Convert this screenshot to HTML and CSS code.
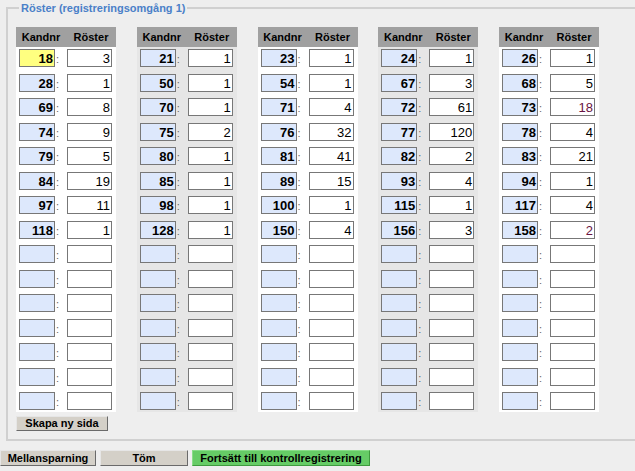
FILE: index.html
```html
<!DOCTYPE html>
<html lang="sv">
<head>
<meta charset="utf-8">
<title>Röster</title>
<link rel="stylesheet" href="styles.css">
</head>
<body>
<fieldset class="group">
  <legend class="legend">Röster (registreringsomgång 1)</legend>
  <div class="columns">
    <div class="col">
      <div class="head"><span>Kandnr</span><span>Röster</span></div>
      <div class="body">
        <div class="row"><div class="kcell"><div class="kbox cur">18</div><span class="colon">:</span></div><div class="rbox">3</div></div>
        <div class="row"><div class="kcell"><div class="kbox">28</div><span class="colon">:</span></div><div class="rbox">1</div></div>
        <div class="row"><div class="kcell"><div class="kbox">69</div><span class="colon">:</span></div><div class="rbox">8</div></div>
        <div class="row"><div class="kcell"><div class="kbox">74</div><span class="colon">:</span></div><div class="rbox">9</div></div>
        <div class="row"><div class="kcell"><div class="kbox">79</div><span class="colon">:</span></div><div class="rbox">5</div></div>
        <div class="row"><div class="kcell"><div class="kbox">84</div><span class="colon">:</span></div><div class="rbox">19</div></div>
        <div class="row"><div class="kcell"><div class="kbox">97</div><span class="colon">:</span></div><div class="rbox">11</div></div>
        <div class="row"><div class="kcell"><div class="kbox">118</div><span class="colon">:</span></div><div class="rbox">1</div></div>
        <div class="row"><div class="kcell"><div class="kbox"></div><span class="colon">:</span></div><div class="rbox"></div></div>
        <div class="row"><div class="kcell"><div class="kbox"></div><span class="colon">:</span></div><div class="rbox"></div></div>
        <div class="row"><div class="kcell"><div class="kbox"></div><span class="colon">:</span></div><div class="rbox"></div></div>
        <div class="row"><div class="kcell"><div class="kbox"></div><span class="colon">:</span></div><div class="rbox"></div></div>
        <div class="row"><div class="kcell"><div class="kbox"></div><span class="colon">:</span></div><div class="rbox"></div></div>
        <div class="row"><div class="kcell"><div class="kbox"></div><span class="colon">:</span></div><div class="rbox"></div></div>
        <div class="row"><div class="kcell"><div class="kbox"></div><span class="colon">:</span></div><div class="rbox"></div></div>
      </div>
    </div>
    <div class="col alt">
      <div class="head"><span>Kandnr</span><span>Röster</span></div>
      <div class="body">
        <div class="row"><div class="kcell"><div class="kbox">21</div><span class="colon">:</span></div><div class="rbox">1</div></div>
        <div class="row"><div class="kcell"><div class="kbox">50</div><span class="colon">:</span></div><div class="rbox">1</div></div>
        <div class="row"><div class="kcell"><div class="kbox">70</div><span class="colon">:</span></div><div class="rbox">1</div></div>
        <div class="row"><div class="kcell"><div class="kbox">75</div><span class="colon">:</span></div><div class="rbox">2</div></div>
        <div class="row"><div class="kcell"><div class="kbox">80</div><span class="colon">:</span></div><div class="rbox">1</div></div>
        <div class="row"><div class="kcell"><div class="kbox">85</div><span class="colon">:</span></div><div class="rbox">1</div></div>
        <div class="row"><div class="kcell"><div class="kbox">98</div><span class="colon">:</span></div><div class="rbox">1</div></div>
        <div class="row"><div class="kcell"><div class="kbox">128</div><span class="colon">:</span></div><div class="rbox">1</div></div>
        <div class="row"><div class="kcell"><div class="kbox"></div><span class="colon">:</span></div><div class="rbox"></div></div>
        <div class="row"><div class="kcell"><div class="kbox"></div><span class="colon">:</span></div><div class="rbox"></div></div>
        <div class="row"><div class="kcell"><div class="kbox"></div><span class="colon">:</span></div><div class="rbox"></div></div>
        <div class="row"><div class="kcell"><div class="kbox"></div><span class="colon">:</span></div><div class="rbox"></div></div>
        <div class="row"><div class="kcell"><div class="kbox"></div><span class="colon">:</span></div><div class="rbox"></div></div>
        <div class="row"><div class="kcell"><div class="kbox"></div><span class="colon">:</span></div><div class="rbox"></div></div>
        <div class="row"><div class="kcell"><div class="kbox"></div><span class="colon">:</span></div><div class="rbox"></div></div>
      </div>
    </div>
    <div class="col">
      <div class="head"><span>Kandnr</span><span>Röster</span></div>
      <div class="body">
        <div class="row"><div class="kcell"><div class="kbox">23</div><span class="colon">:</span></div><div class="rbox">1</div></div>
        <div class="row"><div class="kcell"><div class="kbox">54</div><span class="colon">:</span></div><div class="rbox">1</div></div>
        <div class="row"><div class="kcell"><div class="kbox">71</div><span class="colon">:</span></div><div class="rbox">4</div></div>
        <div class="row"><div class="kcell"><div class="kbox">76</div><span class="colon">:</span></div><div class="rbox">32</div></div>
        <div class="row"><div class="kcell"><div class="kbox">81</div><span class="colon">:</span></div><div class="rbox">41</div></div>
        <div class="row"><div class="kcell"><div class="kbox">89</div><span class="colon">:</span></div><div class="rbox">15</div></div>
        <div class="row"><div class="kcell"><div class="kbox">100</div><span class="colon">:</span></div><div class="rbox">1</div></div>
        <div class="row"><div class="kcell"><div class="kbox">150</div><span class="colon">:</span></div><div class="rbox">4</div></div>
        <div class="row"><div class="kcell"><div class="kbox"></div><span class="colon">:</span></div><div class="rbox"></div></div>
        <div class="row"><div class="kcell"><div class="kbox"></div><span class="colon">:</span></div><div class="rbox"></div></div>
        <div class="row"><div class="kcell"><div class="kbox"></div><span class="colon">:</span></div><div class="rbox"></div></div>
        <div class="row"><div class="kcell"><div class="kbox"></div><span class="colon">:</span></div><div class="rbox"></div></div>
        <div class="row"><div class="kcell"><div class="kbox"></div><span class="colon">:</span></div><div class="rbox"></div></div>
        <div class="row"><div class="kcell"><div class="kbox"></div><span class="colon">:</span></div><div class="rbox"></div></div>
        <div class="row"><div class="kcell"><div class="kbox"></div><span class="colon">:</span></div><div class="rbox"></div></div>
      </div>
    </div>
    <div class="col alt">
      <div class="head"><span>Kandnr</span><span>Röster</span></div>
      <div class="body">
        <div class="row"><div class="kcell"><div class="kbox">24</div><span class="colon">:</span></div><div class="rbox">1</div></div>
        <div class="row"><div class="kcell"><div class="kbox">67</div><span class="colon">:</span></div><div class="rbox">3</div></div>
        <div class="row"><div class="kcell"><div class="kbox">72</div><span class="colon">:</span></div><div class="rbox">61</div></div>
        <div class="row"><div class="kcell"><div class="kbox">77</div><span class="colon">:</span></div><div class="rbox">120</div></div>
        <div class="row"><div class="kcell"><div class="kbox">82</div><span class="colon">:</span></div><div class="rbox">2</div></div>
        <div class="row"><div class="kcell"><div class="kbox">93</div><span class="colon">:</span></div><div class="rbox">4</div></div>
        <div class="row"><div class="kcell"><div class="kbox">115</div><span class="colon">:</span></div><div class="rbox">1</div></div>
        <div class="row"><div class="kcell"><div class="kbox">156</div><span class="colon">:</span></div><div class="rbox">3</div></div>
        <div class="row"><div class="kcell"><div class="kbox"></div><span class="colon">:</span></div><div class="rbox"></div></div>
        <div class="row"><div class="kcell"><div class="kbox"></div><span class="colon">:</span></div><div class="rbox"></div></div>
        <div class="row"><div class="kcell"><div class="kbox"></div><span class="colon">:</span></div><div class="rbox"></div></div>
        <div class="row"><div class="kcell"><div class="kbox"></div><span class="colon">:</span></div><div class="rbox"></div></div>
        <div class="row"><div class="kcell"><div class="kbox"></div><span class="colon">:</span></div><div class="rbox"></div></div>
        <div class="row"><div class="kcell"><div class="kbox"></div><span class="colon">:</span></div><div class="rbox"></div></div>
        <div class="row"><div class="kcell"><div class="kbox"></div><span class="colon">:</span></div><div class="rbox"></div></div>
      </div>
    </div>
    <div class="col">
      <div class="head"><span>Kandnr</span><span>Röster</span></div>
      <div class="body">
        <div class="row"><div class="kcell"><div class="kbox">26</div><span class="colon">:</span></div><div class="rbox">1</div></div>
        <div class="row"><div class="kcell"><div class="kbox">68</div><span class="colon">:</span></div><div class="rbox">5</div></div>
        <div class="row"><div class="kcell"><div class="kbox">73</div><span class="colon">:</span></div><div class="rbox mark">18</div></div>
        <div class="row"><div class="kcell"><div class="kbox">78</div><span class="colon">:</span></div><div class="rbox">4</div></div>
        <div class="row"><div class="kcell"><div class="kbox">83</div><span class="colon">:</span></div><div class="rbox">21</div></div>
        <div class="row"><div class="kcell"><div class="kbox">94</div><span class="colon">:</span></div><div class="rbox">1</div></div>
        <div class="row"><div class="kcell"><div class="kbox">117</div><span class="colon">:</span></div><div class="rbox">4</div></div>
        <div class="row"><div class="kcell"><div class="kbox">158</div><span class="colon">:</span></div><div class="rbox mark">2</div></div>
        <div class="row"><div class="kcell"><div class="kbox"></div><span class="colon">:</span></div><div class="rbox"></div></div>
        <div class="row"><div class="kcell"><div class="kbox"></div><span class="colon">:</span></div><div class="rbox"></div></div>
        <div class="row"><div class="kcell"><div class="kbox"></div><span class="colon">:</span></div><div class="rbox"></div></div>
        <div class="row"><div class="kcell"><div class="kbox"></div><span class="colon">:</span></div><div class="rbox"></div></div>
        <div class="row"><div class="kcell"><div class="kbox"></div><span class="colon">:</span></div><div class="rbox"></div></div>
        <div class="row"><div class="kcell"><div class="kbox"></div><span class="colon">:</span></div><div class="rbox"></div></div>
        <div class="row"><div class="kcell"><div class="kbox"></div><span class="colon">:</span></div><div class="rbox"></div></div>
      </div>
    </div>
  </div>
  <button class="btn btn-new" type="button">Skapa ny sida</button>
</fieldset>
<div class="actions">
  <button class="btn btn-save" type="button">Mellansparning</button>
  <button class="btn btn-clear" type="button">Töm</button>
  <button class="btn btn-go" type="button">Fortsätt till kontrollregistrering</button>
</div>
</body>
</html>
```
FILE: styles.css
```css
html, body {
  margin: 0;
  padding: 0;
  overflow: hidden;
}
body {
  background: #eeeeee;
  font-family: "Liberation Sans", Arial, sans-serif;
  color: #000;
  width: 635px;
  height: 471px;
}
.group {
  margin: 1.5px 0 0 6px;
  padding: 12.5px 0 8px 8px;
  border: 2px solid #d0d0d0;
  border-right: none;
  width: 621px;
  min-width: 0;
  box-sizing: content-box;
}
.legend {
  margin-left: 3px;
  padding: 0 2px;
  font-size: 11px;
  line-height: 13px;
  font-weight: bold;
  color: #4a80c8;
}
.columns {
  display: flex;
  gap: 20.75px;
}
.col {
  width: 100px;
  background: #ffffff;
}
.col.alt {
  background: #e6e6e6;
}
.head {
  display: grid;
  grid-template-columns: 50px 50px;
  height: 20px;
  background: #a0a0a0;
  font-size: 11px;
  font-weight: bold;
  line-height: 20px;
  text-align: center;
}
.body {
  display: flex;
  flex-direction: column;
  gap: 6.5px;
  padding: 2px 0;
}
.row {
  display: flex;
  height: 18px;
}
.kcell {
  width: 50px;
  display: flex;
  padding-left: 3px;
  box-sizing: border-box;
}
.kbox, .rbox {
  box-sizing: border-box;
  height: 18px;
  border: 1px solid #777777;
  font-size: 13px;
  line-height: 17px;
  text-align: right;
  padding-right: 1px;
}
.kbox {
  width: 36px;
  background: #dde8fc;
  font-weight: bold;
}
.kbox.cur {
  background: #ffff80;
}
.colon {
  font-size: 11px;
  line-height: 20px;
  color: #666666;
  padding-left: 1px;
}
.rbox {
  width: 45px;
  margin-left: 1px;
  background: #ffffff;
}
.rbox.mark {
  color: #6a1442;
}
.btn {
  font-family: "Liberation Sans", Arial, sans-serif;
  font-size: 11px;
  font-weight: bold;
  color: #000;
  background: #d4d0c8;
  border: 1px solid;
  border-color: #e6e6e6 #6a6a6a #6a6a6a #e6e6e6;
  padding: 0;
  margin: 0;
  line-height: 13px;
  box-sizing: border-box;
}
.btn-new {
  display: block;
  margin-top: 4px;
  width: 92px;
  height: 15px;
}
.actions {
  display: flex;
  gap: 4px;
  margin-top: 9px;
}
.actions .btn {
  height: 16px;
}
.btn-save { width: 96px; }
.btn-clear { width: 88px; }
.btn-go {
  width: 178px;
  background: #66cc66;
  border-color: #88dd88 #3f9a3f #3f9a3f #88dd88;
}
```
